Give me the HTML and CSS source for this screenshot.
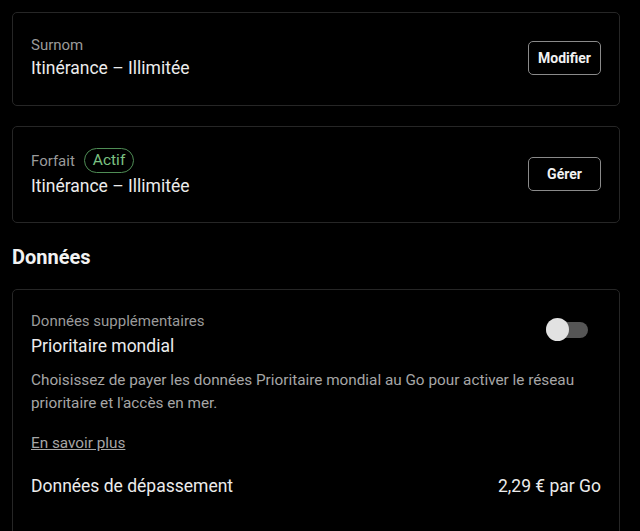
FILE: index.html
```html
<!DOCTYPE html>
<html lang="fr">
<head>
<meta charset="utf-8">
<title>Forfait</title>
<link rel="stylesheet" href="styles.css">
</head>
<body>
<main class="page">
  <section class="card row">
    <div class="info">
      <div class="label">Surnom</div>
      <div class="title">Itinérance – Illimitée</div>
    </div>
    <button class="btn">Modifier</button>
  </section>

  <section class="card row card-plan">
    <div class="info">
      <div class="label label-badge">Forfait <span class="badge">Actif</span></div>
      <div class="title">Itinérance – Illimitée</div>
    </div>
    <button class="btn">Gérer</button>
  </section>

  <h2 class="section-title">Données</h2>

  <section class="card card-data">
    <div class="row row-top">
      <div class="info">
        <div class="label">Données supplémentaires</div>
        <div class="title title-gap">Prioritaire mondial</div>
      </div>
      <span class="toggle"><span class="knob"></span></span>
    </div>
    <p class="desc">Choisissez de payer les données Prioritaire mondial au Go pour activer le réseau prioritaire et l'accès en mer.</p>
    <a class="link" href="#">En savoir plus</a>
    <div class="row row-price">
      <span class="title">Données de dépassement</span>
      <span class="title">2,29 € par Go</span>
    </div>
  </section>
</main>
</body>
</html>
```
FILE: styles.css
```css
* { box-sizing: border-box; }
html, body { margin: 0; background: #000; }
body {
  font-family: Roboto, "Noto Sans", sans-serif;
  color: #e8e8e8;
}
.page {
  padding: 12px 20px 0 12px;
  display: flex;
  flex-direction: column;
}
.card {
  border: 1px solid #262626;
  border-radius: 5px;
  padding: 22px 18px 24px;
  background: #000;
}
.card-plan { padding: 21px 18px 23px; }
.row {
  display: flex;
  align-items: center;
  justify-content: space-between;
}
.card + .card { margin-top: 20px; }
.label {
  font-size: 15px;
  line-height: 20px;
  color: #9a9a9a;
}
.label-badge {
  display: flex;
  align-items: center;
  gap: 9px;
}
.badge {
  display: inline-block;
  border: 1px solid #4f8d55;
  color: #7cc283;
  border-radius: 13px;
  font-size: 15.5px;
  line-height: 23px;
  padding: 0 8px;
}
.title {
  font-size: 17.5px;
  line-height: 26px;
  color: #ececec;
}
.title-gap { margin-top: 2px; }
.btn {
  font-family: inherit;
  background: #000;
  color: #f2f2f2;
  border: 1px solid #8a8a8a;
  border-radius: 5px;
  font-size: 14px;
  font-weight: 700;
  height: 34px;
  width: 73px;
  padding: 0;
}
.section-title {
  margin: 20px 0 18px;
  font-size: 20px;
  line-height: 28px;
  font-weight: 700;
  color: #f2f2f2;
}
.card-data { padding-top: 21px; padding-bottom: 40px; }
.row-top { padding-right: 13px; }
.toggle {
  position: relative;
  width: 42px;
  height: 16px;
  border-radius: 8px;
  background: #555;
  margin-top: -10px;
}
.knob {
  position: absolute;
  left: 0;
  top: -4px;
  width: 23px;
  height: 23px;
  border-radius: 50%;
  background: #e2e2e2;
}
.desc {
  margin: 10px 0 0;
  font-size: 15.3px;
  line-height: 23px;
  color: #a6a6a6;
}
.link {
  display: inline-block;
  margin-top: 18px;
  font-size: 15.3px;
  line-height: 20px;
  color: #a6a6a6;
  align-self: flex-start;
}
.row-price { margin-top: 20px; }
```
